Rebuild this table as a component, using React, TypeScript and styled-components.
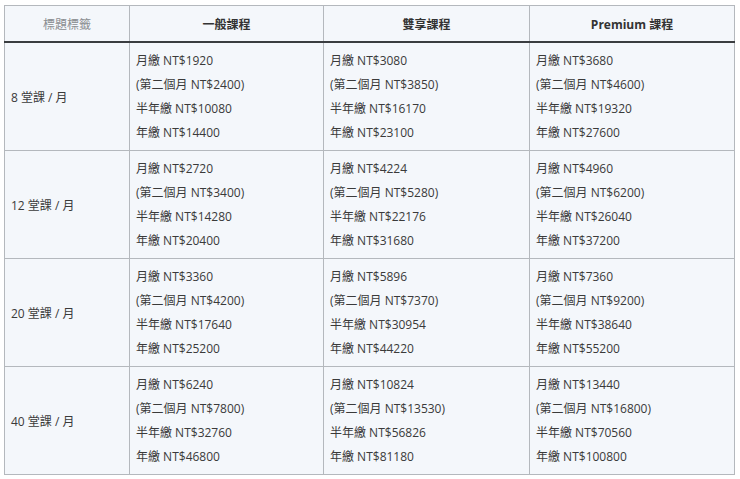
import React from "react";
import styled, { createGlobalStyle } from "styled-components";

const GlobalStyle = createGlobalStyle`
  body {
    margin: 0;
    background: #fff;
    font-family: "Open Sans", "Noto Sans CJK TC", sans-serif;
    color: #3a3a3a;
  }
`;

const plans = ["一般課程", "雙享課程", "Premium 課程"];

// 每列：堂數、三種方案的 [月繳, 第二個月, 半年繳, 年繳]
const rows: { label: string; prices: number[][] }[] = [
  {
    label: "8 堂課 / 月",
    prices: [
      [1920, 2400, 10080, 14400],
      [3080, 3850, 16170, 23100],
      [3680, 4600, 19320, 27600],
    ],
  },
  {
    label: "12 堂課 / 月",
    prices: [
      [2720, 3400, 14280, 20400],
      [4224, 5280, 22176, 31680],
      [4960, 6200, 26040, 37200],
    ],
  },
  {
    label: "20 堂課 / 月",
    prices: [
      [3360, 4200, 17640, 25200],
      [5896, 7370, 30954, 44220],
      [7360, 9200, 38640, 55200],
    ],
  },
  {
    label: "40 堂課 / 月",
    prices: [
      [6240, 7800, 32760, 46800],
      [10824, 13530, 56826, 81180],
      [13440, 16800, 70560, 100800],
    ],
  },
];

const App = () => {
  return (
    <>
      <GlobalStyle />
      <Wrapper>
        <Table>
          <colgroup>
            <col style={{ width: 125 }} />
            <col style={{ width: 194 }} />
            <col style={{ width: 206 }} />
            <col style={{ width: 205 }} />
          </colgroup>
          <thead>
            <tr>
              <HeadCell $muted>標題標籤</HeadCell>
              {plans.map((p) => (
                <HeadCell key={p}>{p}</HeadCell>
              ))}
            </tr>
          </thead>
          <tbody>
            {rows.map((row) => (
              <tr key={row.label}>
                <LabelCell>{row.label}</LabelCell>
                {row.prices.map((p, idx) => (
                  <PriceCell key={idx}>
                    <Line>月繳 NT${p[0]}</Line>
                    <Line>(第二個月 NT${p[1]})</Line>
                    <Line>半年繳 NT${p[2]}</Line>
                    <Line>年繳 NT${p[3]}</Line>
                  </PriceCell>
                ))}
              </tr>
            ))}
          </tbody>
        </Table>
      </Wrapper>
    </>
  );
};

export default App;

const Wrapper = styled.div`
  padding: 5px 6px 5px 4px;
`;

const Table = styled.table`
  width: 730px;
  border-collapse: collapse;
  table-layout: fixed;
  background: #f4f7fb;
  font-size: 12px;
`;

const HeadCell = styled.th<{ $muted?: boolean }>`
  height: 35px;
  padding: 0 6px;
  border: 1px solid #b4b8bd;
  border-bottom: 2px solid #3a3d40;
  text-align: center;
  font-weight: ${(p) => (p.$muted ? 400 : 700)};
  color: ${(p) => (p.$muted ? "#8a8d91" : "#333")};
`;

const LabelCell = styled.td`
  padding: 0 6px;
  border: 1px solid #b4b8bd;
  vertical-align: middle;
`;

const PriceCell = styled.td`
  height: 107px;
  box-sizing: border-box;
  padding: 6px 6px 5px;
  border: 1px solid #b4b8bd;
  vertical-align: middle;
`;

const Line = styled.div`
  line-height: 24px;
  white-space: nowrap;
`;
